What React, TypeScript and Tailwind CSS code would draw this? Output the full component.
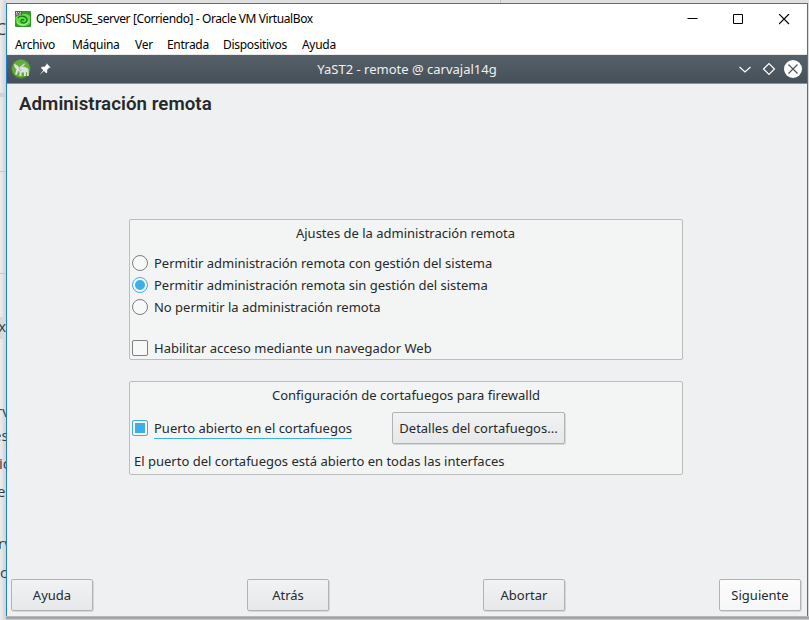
import type { ReactNode } from "react";

const noto = "font-['Noto_Sans',sans-serif]";

function Button({ children, className = "" }: { children: ReactNode; className?: string }) {
  return (
    <button
      className={`flex h-8 shrink-0 items-center justify-center rounded-[2px] border border-[#b0b2b4] bg-gradient-to-b from-[#f1f2f3] to-[#e7e8ea] pt-px shadow-[1px_1px_0_#d5d7d9] ${className}`}
    >
      {children}
    </button>
  );
}

function Radio({ label, checked = false }: { label: string; checked?: boolean }) {
  return (
    <label className="flex h-[22px] items-center gap-1.5">
      <span
        className={`flex size-4 items-center justify-center rounded-full border bg-[#f7f8f8] ${checked ? "border-[#3daee9]" : "border-[#7d8082]"}`}
      >
        {checked && <span className="size-2.5 rounded-full bg-[#3daee9]" />}
      </span>
      <span className="pt-0.5 tracking-[-0.010px]">{label}</span>
    </label>
  );
}

function BackgroundStrip() {
  const row = "flex shrink-0 items-center whitespace-nowrap";
  return (
    <div className="flex h-[620px] w-1.5 shrink-0 flex-col overflow-hidden bg-gradient-to-r from-[#ededee] to-[#d2d2d3] font-['Open_Sans',sans-serif] text-[15px] text-[#343b43]">
      <div className={`${row} mt-[19px] h-5 text-[16px]`}><span className="-ml-[4px]">C</span></div>
      <div className="mt-[54px] h-1 shrink-0 bg-[#d0d1d5]" />
      <div className="mt-[74px] h-px shrink-0 bg-[#c9c9ca]" />
      <div className="mt-[101px] h-px shrink-0 bg-[#c9c9ca]" />
      <div className={`${row} mt-[43px] h-[22px] bg-[#d9d9da] font-['Liberation_Mono',monospace] text-[14px]`}><span className="-ml-[2px]">x</span></div>
      <div className={`${row} mt-[62px] h-5`}><span className="-ml-[4px]">rv</span></div>
      <div className={`${row} mt-1 h-5`}><span className="-ml-[7px]">es</span></div>
      <div className={`${row} mt-[8px] h-5`}><span className="-ml-px">ic</span></div>
      <div className={`${row} mt-[8px] h-5`}><span className="-ml-[3px]">e</span></div>
      <div className={`${row} mt-[32px] h-5`}><span className="-ml-[2px]">rv</span></div>
      <div className={`${row} mt-[9px] h-5`}><span>c</span></div>
    </div>
  );
}

function VirtualBoxGuestIcon() {
  return (
    <svg width="16" height="16" viewBox="0 0 16 16">
      <rect width="16" height="16" rx="1" fill="#2f9a26" />
      <path d="M0 7C3 3 11 1 15 5v7c-2 4-9 4-13 1z" fill="#62dc40" />
      <path d="M3 7c2-3 9-2 9 2 0 3-5 4-6 1.500-.5-2 2.500-2.500 3-1" fill="none" stroke="#17761b" strokeWidth="1.300" />
      <path d="M2 11c2 4 9 4 12-1" fill="none" stroke="#b5f89a" />
      <path d="M0 0h7v4H0z" fill="#5b5f61" />
      <path d="M1 1.500h1m1 0h1m1 0h1M1 3h2m1 0h2" stroke="#d8dbd8" />
    </svg>
  );
}

function YastIcon() {
  return (
    <svg width="20" height="20" viewBox="0 0 20 20">
      <circle cx="10" cy="10" r="9.800" fill="#4a8336" />
      <circle cx="10" cy="9.500" r="8.900" fill="#64ad3a" />
      <path d="M3 4.500 7 7l1 1.500 2-.5c3-.8 6 .2 7.500 2.500l.3 6.500H16v-4l-1 .3V17h-2v-3.500h-2.500V17h-2v-4.500l-1-.5-2 4L4 15.500l1.500-5L3.500 8z" fill="#dbe4dc" />
      <path d="M8.500 8 13.500 4l.3 2-3 2.500z" fill="#cbd9c8" />
      <path d="m8 9 1 2.500 2-.5" stroke="#9fb29c" strokeWidth=".8" fill="none" />
    </svg>
  );
}

export default function App() {
  return (
    <div className={`flex h-[620px] w-[809px] overflow-hidden bg-[#dadada] text-[#26292b] ${noto}`}>
      <BackgroundStrip />
      <div className="flex min-w-0 flex-1 flex-col">
        <div className="flex h-[3px] shrink-0 bg-[#e0e0e0]">
          <div className="ml-[494px] h-full w-px bg-[#bdbdbd]" />
        </div>
        <main className="flex h-[613px] w-[802px] shrink-0 flex-col border border-b-0 border-[#1c80cf] bg-[#eff0f1]">
          <header className="flex h-[30px] shrink-0 items-center bg-white pl-2 text-black">
            <VirtualBoxGuestIcon />
            <h1 className="ml-[5px] whitespace-nowrap text-[12px] tracking-[-0.400px]">OpenSUSE_server [Corriendo] - Oracle VM VirtualBox</h1>
            <div className="mr-[17px] ml-auto flex items-center gap-[35px]">
              <svg width="11" height="11" viewBox="0 0 11 11"><path d="M.5 4.500h10" stroke="#000" /></svg>
              <svg width="11" height="11" viewBox="0 0 11 11"><path d="M.5.5h9v9h-9z" fill="none" stroke="#000" /></svg>
              <svg width="11" height="11" viewBox="0 0 11 11"><path d="m0 0 10 10m0-10-10 10" fill="none" stroke="#000" strokeWidth="1.200" /></svg>
            </div>
          </header>
          <nav className="flex h-[21px] shrink-0 items-center border-b border-[#e8e8e8] bg-white pt-0.5 pl-2 text-[12px] tracking-[-0.300px] text-black">
            <span className="w-[57px]">Archivo</span>
            <span className="w-[63px]">Máquina</span>
            <span className="w-8">Ver</span>
            <span className="w-14">Entrada</span>
            <span className="w-[79px]">Dispositivos</span>
            <span>Ayuda</span>
          </nav>
          <div className="flex h-[29px] shrink-0 items-center border-b border-[#4ba5da] bg-gradient-to-b from-[#566068] to-[#465058] pl-1 text-[#eff0f1]">
            <YastIcon />
            <svg className="ml-2" width="12" height="12" viewBox="0 0 12 12">
              <path d="m7.500.3 4.200 4.200-1.500.2-2 2v2.800l-1 .7-2.200-2.200-4.500 4L4.300 7.300 2 5l.7-1.200h2.800l1.800-1.900z" fill="#fff" />
            </svg>
            <h2 className="ml-[261px] w-[190px] pt-px text-center text-[13px]">YaST2 - remote @ carvajal14g</h2>
            <div className="mr-[5px] ml-auto flex items-center">
              <svg width="64" height="20" viewBox="0 0 64 20" fill="none" stroke="#fff" strokeWidth="1.200">
                <path d="m1.500 8 5.500 5 5.500-5M25.500 10 31 4.500l5.500 5.500-5.500 5.500z" />
                <circle cx="55" cy="10" r="9" fill="#fff" stroke="none" />
                <path d="m50.500 5.500 9 9m0-9-9 9" stroke="#4c565e" />
              </svg>
            </div>
          </div>
          <section className="flex h-[532px] shrink-0 flex-col text-[13px]">
            <h3 className="mt-2 ml-3 h-6 font-['Roboto',sans-serif] text-[18.700px] leading-6 font-semibold tracking-[0.050px]">Administración remota</h3>
            <fieldset className="mt-[103px] ml-[122px] flex h-[141px] w-[554px] flex-col rounded-[2px] border border-[#bbbcbd] bg-[#f3f5f4] px-0.5">
              <h4 className="h-[32px] pt-[3px] pr-px text-center leading-5">Ajustes de la administración remota</h4>
              <Radio label="Permitir administración remota con gestión del sistema" />
              <Radio label="Permitir administración remota sin gestión del sistema" checked />
              <Radio label="No permitir la administración remota" />
              <label className="mt-[19px] flex h-[22px] items-center gap-1.5">
                <span className="size-4 rounded-[2px] border border-[#7d8082] bg-[#f7f8f8]" />
                <span className="pt-0.5">Habilitar acceso mediante un navegador Web</span>
              </label>
            </fieldset>
            <fieldset className="mt-[21px] ml-[122px] flex h-[94px] w-[554px] flex-col rounded-[2px] border border-[#bbbebd] bg-[#f3f5f4] px-0.5">
              <h4 className="h-[30px] pt-[3px] text-center leading-5">Configuración de cortafuegos para firewalld</h4>
              <div className="flex h-8 items-center">
                <span className="flex size-4 items-center justify-center rounded-[2px] border border-[#3daee9] bg-[#f7f8f8]"><span className="size-2.5 bg-[#3daee9]" /></span>
                <label className="mt-0.5 ml-1.5 h-5 w-[198px] border-b border-[#3daee9] leading-[19px] whitespace-nowrap">Puerto abierto en el cortafuegos</label>
                <Button className="ml-10 w-[173px]">Detalles del cortafuegos...</Button>
              </div>
              <p className="mt-[7px] pl-0.5 leading-5">El puerto del cortafuegos está abierto en todas las interfaces</p>
            </fieldset>
            <footer className="mt-auto mb-[5px] flex gap-[154px] px-1">
              <Button className="w-[82px]">Ayuda</Button>
              <Button className="w-[82px]">Atrás</Button>
              <Button className="w-[82px]">Abortar</Button>
              <Button className="w-[82px] from-[#fcfcfc] to-[#f7f7f7]">Siguiente</Button>
            </footer>
          </section>
        </main>
        <div className="h-1 shrink-0 bg-gradient-to-b from-[#c4c6c8] via-[#949698] to-[#ddd]" />
      </div>
    </div>
  );
}
